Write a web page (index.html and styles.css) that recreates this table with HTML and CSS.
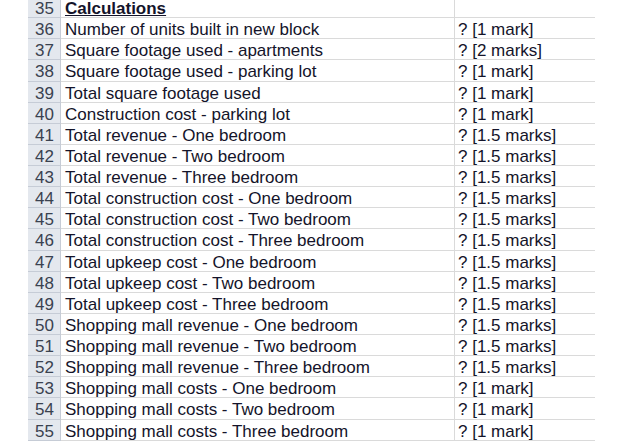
FILE: index.html
```html
<!DOCTYPE html>
<html>
<head>
<meta charset="utf-8">
<link rel="stylesheet" href="styles.css">
</head>
<body>
<div class="sheet">
  <div class="rh">35</div><div class="ca"><span class="title">Calculations</span></div><div class="cb"></div>
  <div class="rh">36</div><div class="ca">Number of units built in new block</div><div class="cb">? [1 mark]</div>
  <div class="rh">37</div><div class="ca">Square footage used - apartments</div><div class="cb">? [2 marks]</div>
  <div class="rh">38</div><div class="ca">Square footage used - parking lot</div><div class="cb">? [1 mark]</div>
  <div class="rh">39</div><div class="ca">Total square footage used</div><div class="cb">? [1 mark]</div>
  <div class="rh">40</div><div class="ca">Construction cost - parking lot</div><div class="cb">? [1 mark]</div>
  <div class="rh">41</div><div class="ca">Total revenue - One bedroom</div><div class="cb">? [1.5 marks]</div>
  <div class="rh">42</div><div class="ca">Total revenue - Two bedroom</div><div class="cb">? [1.5 marks]</div>
  <div class="rh">43</div><div class="ca">Total revenue - Three bedroom</div><div class="cb">? [1.5 marks]</div>
  <div class="rh">44</div><div class="ca">Total construction cost - One bedroom</div><div class="cb">? [1.5 marks]</div>
  <div class="rh">45</div><div class="ca">Total construction cost - Two bedroom</div><div class="cb">? [1.5 marks]</div>
  <div class="rh">46</div><div class="ca">Total construction cost - Three bedroom</div><div class="cb">? [1.5 marks]</div>
  <div class="rh">47</div><div class="ca">Total upkeep cost - One bedroom</div><div class="cb">? [1.5 marks]</div>
  <div class="rh">48</div><div class="ca">Total upkeep cost - Two bedroom</div><div class="cb">? [1.5 marks]</div>
  <div class="rh">49</div><div class="ca">Total upkeep cost - Three bedroom</div><div class="cb">? [1.5 marks]</div>
  <div class="rh">50</div><div class="ca">Shopping mall revenue - One bedroom</div><div class="cb">? [1.5 marks]</div>
  <div class="rh">51</div><div class="ca">Shopping mall revenue - Two bedroom</div><div class="cb">? [1.5 marks]</div>
  <div class="rh">52</div><div class="ca">Shopping mall revenue - Three bedroom</div><div class="cb">? [1.5 marks]</div>
  <div class="rh">53</div><div class="ca">Shopping mall costs - One bedroom</div><div class="cb">? [1 mark]</div>
  <div class="rh">54</div><div class="ca">Shopping mall costs - Two bedroom</div><div class="cb">? [1 mark]</div>
  <div class="rh">55</div><div class="ca">Shopping mall costs - Three bedroom</div><div class="cb">? [1 mark]</div>
</div>
</body>
</html>
```

FILE: styles.css
```css
html, body {
  margin: 0;
  padding: 0;
  background: #ffffff;
}
body {
  font-family: "Liberation Sans", Arial, sans-serif;
  font-size: 17px;
  color: #14142a;
}
.sheet {
  display: grid;
  grid-template-columns: 33px 394px 140px;
  grid-auto-rows: 21.13px;
  margin: -3px 0 0 28px;
  width: 567px;
}
.sheet > div {
  box-sizing: border-box;
  line-height: 19px;
  padding-top: 2px;
  white-space: nowrap;
  overflow: hidden;
}
.rh {
  background: #e4e8ee;
  border-bottom: 1px solid #c6ccd6;
  border-right: 1px solid #c6ccd6;
  text-align: center;
  color: #3a4250;
  padding-left: 1px;
}
.ca {
  border-bottom: 1px solid #dadada;
  border-right: 1px solid #dadada;
  padding-left: 4px;
}
.cb {
  border-bottom: 1px solid #dadada;
  padding-left: 3px;
}
.title {
  font-weight: bold;
  text-decoration: underline;
}
```
